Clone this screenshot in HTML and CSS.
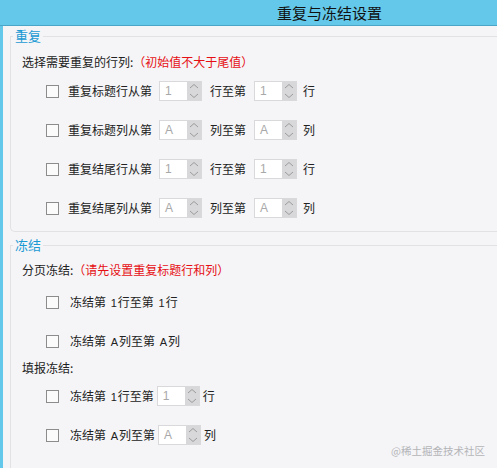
FILE: index.html
```html
<!DOCTYPE html>
<html lang="zh">
<head>
<meta charset="utf-8">
<title>重复与冻结设置</title>
<link rel="stylesheet" href="styles.css">
</head>
<body>
<div class="header"><span class="title">重复与冻结设置</span></div>
<div class="main">
  <fieldset class="group g-repeat">
    <legend>重复</legend>
    <div class="label">选择需要重复的行列:<span class="hint">（初始值不大于尾值）</span></div>
    <div class="row">
      <span class="cb"></span><span class="txt">重复标题行从第</span>
      <span class="spin s1"><span class="val">1</span><span class="arrows"><svg width="14" height="18" viewBox="0 0 14 18"><path d="M3 6 L7 2.5 L11 6 M3 12 L7 15.5 L11 12" fill="none" stroke="#9c9c9c" stroke-width="1"/></svg></span></span>
      <span class="txt t2">行至第</span>
      <span class="spin s2"><span class="val">1</span><span class="arrows"><svg width="14" height="18" viewBox="0 0 14 18"><path d="M3 6 L7 2.5 L11 6 M3 12 L7 15.5 L11 12" fill="none" stroke="#9c9c9c" stroke-width="1"/></svg></span></span>
      <span class="txt t3">行</span>
    </div>
    <div class="row">
      <span class="cb"></span><span class="txt">重复标题列从第</span>
      <span class="spin s1"><span class="val">A</span><span class="arrows"><svg width="14" height="18" viewBox="0 0 14 18"><path d="M3 6 L7 2.5 L11 6 M3 12 L7 15.5 L11 12" fill="none" stroke="#9c9c9c" stroke-width="1"/></svg></span></span>
      <span class="txt t2">列至第</span>
      <span class="spin s2"><span class="val">A</span><span class="arrows"><svg width="14" height="18" viewBox="0 0 14 18"><path d="M3 6 L7 2.5 L11 6 M3 12 L7 15.5 L11 12" fill="none" stroke="#9c9c9c" stroke-width="1"/></svg></span></span>
      <span class="txt t3">列</span>
    </div>
    <div class="row">
      <span class="cb"></span><span class="txt">重复结尾行从第</span>
      <span class="spin s1"><span class="val">1</span><span class="arrows"><svg width="14" height="18" viewBox="0 0 14 18"><path d="M3 6 L7 2.5 L11 6 M3 12 L7 15.5 L11 12" fill="none" stroke="#9c9c9c" stroke-width="1"/></svg></span></span>
      <span class="txt t2">行至第</span>
      <span class="spin s2"><span class="val">1</span><span class="arrows"><svg width="14" height="18" viewBox="0 0 14 18"><path d="M3 6 L7 2.5 L11 6 M3 12 L7 15.5 L11 12" fill="none" stroke="#9c9c9c" stroke-width="1"/></svg></span></span>
      <span class="txt t3">行</span>
    </div>
    <div class="row">
      <span class="cb"></span><span class="txt">重复结尾列从第</span>
      <span class="spin s1"><span class="val">A</span><span class="arrows"><svg width="14" height="18" viewBox="0 0 14 18"><path d="M3 6 L7 2.5 L11 6 M3 12 L7 15.5 L11 12" fill="none" stroke="#9c9c9c" stroke-width="1"/></svg></span></span>
      <span class="txt t2">列至第</span>
      <span class="spin s2"><span class="val">A</span><span class="arrows"><svg width="14" height="18" viewBox="0 0 14 18"><path d="M3 6 L7 2.5 L11 6 M3 12 L7 15.5 L11 12" fill="none" stroke="#9c9c9c" stroke-width="1"/></svg></span></span>
      <span class="txt t3">列</span>
    </div>
  </fieldset>

  <fieldset class="group g-freeze">
    <legend>冻结</legend>
    <div class="label">分页冻结:<span class="hint">（请先设置重复标题行和列）</span></div>
    <div class="row frow first">
      <span class="cb"></span><span class="txt">冻结第 <span class="n">1</span>行至第 <span class="n">1</span>行</span>
    </div>
    <div class="row frow">
      <span class="cb"></span><span class="txt">冻结第 <span class="n">A</span>列至第 <span class="n">A</span>列</span>
    </div>
    <div class="label l2">填报冻结:</div>
    <div class="row frow">
      <span class="cb"></span><span class="txt">冻结第 <span class="n">1</span>行至第</span>
      <span class="spin s3"><span class="val">1</span><span class="arrows"><svg width="14" height="18" viewBox="0 0 14 18"><path d="M3 6 L7 2.5 L11 6 M3 12 L7 15.5 L11 12" fill="none" stroke="#9c9c9c" stroke-width="1"/></svg></span></span>
      <span class="txt t4">行</span>
    </div>
    <div class="row frow">
      <span class="cb"></span><span class="txt">冻结第 <span class="n">A</span>列至第</span>
      <span class="spin s3"><span class="val">A</span><span class="arrows"><svg width="14" height="18" viewBox="0 0 14 18"><path d="M3 6 L7 2.5 L11 6 M3 12 L7 15.5 L11 12" fill="none" stroke="#9c9c9c" stroke-width="1"/></svg></span></span>
      <span class="txt t4">列</span>
    </div>
  </fieldset>
  <div class="watermark">@稀土掘金技术社区</div>
</div>
</body>
</html>
```

FILE: styles.css
```css
html, body {
  margin: 0;
  padding: 0;
  width: 497px;
  height: 468px;
  overflow: hidden;
  background: #f5f5f7;
  font-family: "Noto Sans CJK SC", "Noto Sans", sans-serif;
  font-size: 12px;
  color: #222;
}

.header {
  height: 25px;
  background: #63c8e9;
  border-bottom: 1px solid #4aa6c6;
  padding-left: 277px;
  line-height: 25px;
}

.title {
  font-size: 15px;
  color: #111;
}

.main {
  position: relative;
  height: 442px;
  border-left: 3px solid #63c8e9;
  background: #f5f5f7;
  overflow: hidden;
}

.group {
  margin: 3px 0 0 7px;
  padding: 9px 0 13px 11px;
  border: 1px solid #e2e2e5;
  border-right: none;
  border-radius: 0 0 0 5px;
  min-width: 0;
}

.group legend {
  margin-left: -9px;
  padding: 0 2px;
  font-size: 13px;
  line-height: 14px;
  color: #1b9ad4;
}

.g-freeze {
  margin-top: 6px;
  padding-top: 8px;
  padding-bottom: 60px;
}

.label {
  height: 20px;
  line-height: 20px;
  white-space: nowrap;
}

.hint {
  color: #e60f14;
}

.row {
  display: flex;
  align-items: center;
  height: 20px;
  margin-top: 19px;
  padding-left: 24px;
  white-space: nowrap;
}

.label + .row {
  margin-top: 9px;
}

.g-freeze .frow.first {
  margin-top: 12px;
}

.g-freeze .l2 {
  margin-top: 7px;
}

.g-freeze .l2 + .row {
  margin-top: 8px;
}

.cb {
  box-sizing: border-box;
  width: 13px;
  height: 13px;
  border: 1px solid #8c8c8c;
  background: #fbfbfc;
  margin-right: 9px;
  flex: none;
}

.frow .cb {
  margin-right: 11px;
}

.txt {
  line-height: 20px;
}

.n {
  display: inline-block;
  margin-left: 2px;
  margin-right: 1px;
  font-family: "Liberation Sans", sans-serif;
  font-size: 11px;
}

.spin {
  box-sizing: border-box;
  display: flex;
  width: 43px;
  height: 20px;
  border: 1px solid #d9d9dc;
  background: #fff;
  flex: none;
}

.spin .val {
  flex: 1;
  padding-left: 5px;
  line-height: 18px;
  color: #a8a8a8;
  font-family: "Liberation Sans", "Noto Sans", sans-serif;
  font-size: 12px;
}

.spin .arrows {
  width: 14px;
  height: 18px;
  background: #d8d8da;
  display: flex;
}

.s1 {
  margin-left: 7px;
}

.t2 {
  margin-left: 8px;
}

.s2 {
  margin-left: 8px;
}

.t3 {
  margin-left: 6px;
}

.s3 {
  margin-left: 3px;
}

.t4 {
  margin-left: 3px;
}

.watermark {
  position: absolute;
  right: 12px;
  bottom: 10px;
  font-size: 10.5px;
  color: #b4b4b8;
  line-height: 14px;
}
```
